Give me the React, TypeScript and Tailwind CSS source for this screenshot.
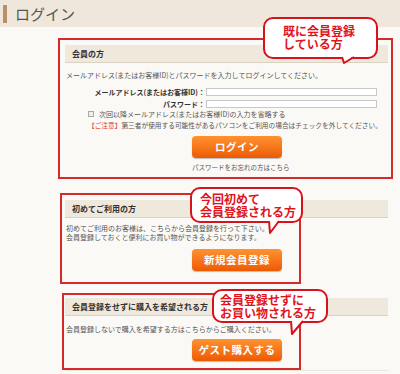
import React from 'react'

const FONT = "font-['Noto_Sans_CJK_JP','Noto_Sans',sans-serif]"

function SectionHead({ title }: { title: string }) {
  return (
    <div className="h-[18px] bg-[#efe8dc] border-b border-[#dcd2c2] flex items-center pl-[7px]">
      <span className="text-[8px] font-bold text-[#333] leading-none">{title}</span>
    </div>
  )
}

function OrangeButton({ label, className = '' }: { label: string; className?: string }) {
  return (
    <div
      className={`w-[90px] h-[22px] rounded-[4px] bg-gradient-to-b from-[#ff922f] to-[#ec5a00] shadow-[0_1px_1px_rgba(0,0,0,0.25)] flex items-center justify-center ${className}`}
    >
      <span className="text-white font-bold text-[10.5px] leading-none tracking-[0.5px]">{label}</span>
    </div>
  )
}

function Callout({
  lines,
  className,
  pad,
  tail,
}: {
  lines: string[]
  className: string
  pad: string
  tail: { left: number; tipX: number; width: number; height: number }
}) {
  const { left, tipX, width, height } = tail
  return (
    <div className={`absolute ${className}`}>
      <div className={`relative h-full rounded-[10px] border-2 border-[#d8121c] bg-white ${pad}`}>
        {lines.map((l) => (
          <div key={l} className="text-[12px] leading-[13px] font-bold text-[#e0141e] whitespace-nowrap">
            {l}
          </div>
        ))}
        <svg
          className="absolute"
          style={{ left, bottom: -height }}
          width={width}
          height={height + 3}
          viewBox={`0 0 ${width} ${height + 3}`}
        >
          <polygon points={`0,0 ${width},0 ${tipX},${height + 3}`} fill="#fff" />
          <polyline
            points={`1,3 ${tipX},${height + 2} ${width - 1},3`}
            fill="none"
            stroke="#d8121c"
            strokeWidth="2"
            strokeLinejoin="round"
          />
        </svg>
      </div>
    </div>
  )
}

export default function App() {
  return (
    <div className={`relative w-[400px] h-[374px] overflow-hidden bg-[#fbf9f6] ${FONT}`}>
      <div className="h-[27px] bg-[#efe7dc] flex items-center pl-[3px]">
        <div className="w-[4px] h-[18px] bg-[#b8916a]" />
        <span className="ml-[8px] text-[15px] text-[#555] leading-none">ログイン</span>
      </div>

      <div className="pl-[65px] w-[388px]">
        {/* 会員の方 */}
        <div className="mt-[18px]">
          <SectionHead title="会員の方" />
          <p className="mt-[7px] pl-[1px] text-[7px] leading-[10px] text-[#555] whitespace-nowrap">
            メールアドレス(またはお客様ID)とパスワードを入力してログインしてください。
          </p>
          <div className="mt-[8px] flex items-center h-[8px]">
            <span className="w-[140px] text-right text-[7px] font-bold text-[#333] leading-none whitespace-nowrap">
              メールアドレス(またはお客様ID)：
            </span>
            <div className="ml-[1px] w-[171px] h-[8px] bg-white border border-[#c8c8c8]" />
          </div>
          <div className="mt-[4px] flex items-center h-[8px]">
            <span className="w-[140px] text-right text-[7px] font-bold text-[#333] leading-none">パスワード：</span>
            <div className="ml-[1px] w-[171px] h-[8px] bg-white border border-[#c8c8c8]" />
          </div>
          <div className="mt-[1px] flex items-center h-[10px] pl-[23px]">
            <div className="w-[6px] h-[6px] border border-[#aaa] bg-[#eee]" />
            <span className="ml-[5px] text-[7px] text-[#555] leading-none whitespace-nowrap">
              次回以降メールアドレス(またはお客様ID)の入力を省略する
            </span>
          </div>
          <p className="mt-[1px] pl-[23px] text-[6.7px] leading-[10px] text-[#555] whitespace-nowrap">
            <span className="text-[#e23b2e]">【ご注意】</span>
            第三者が使用する可能性があるパソコンをご利用の場合はチェックを外してください。
          </p>
          <OrangeButton label="ログイン" className="mt-[6px] ml-[127px]" />
          <p className="mt-[4px] ml-[127px] text-[6.5px] leading-[10px] text-[#555] whitespace-nowrap">
            パスワードをお忘れの方はこちら
          </p>
        </div>

        {/* 初めてご利用の方 */}
        <div className="mt-[28px]">
          <SectionHead title="初めてご利用の方" />
          <div className="mt-[6px] pl-[1px] text-[7px] leading-[9px] text-[#555] whitespace-nowrap">
            <p>初めてご利用のお客様は、こちらから会員登録を行って下さい。</p>
            <p>会員登録しておくと便利にお買い物ができるようになります。</p>
          </div>
          <OrangeButton label="新規会員登録" className="mt-[7px] ml-[127px]" />
        </div>

        {/* ゲスト */}
        <div className="mt-[27px] pb-[9px] border-b border-[#ebe6dd]">
          <SectionHead title="会員登録をせずに購入を希望される方" />
          <p className="mt-[8px] pl-[1px] text-[7px] leading-[10px] text-[#555] whitespace-nowrap">
            会員登録しないで購入を希望する方はこちらからご購入ください。
          </p>
          <OrangeButton label="ゲスト購入する" className="mt-[5px] ml-[127px]" />
        </div>
      </div>

      {/* annotation frames */}
      <div className="absolute left-[58px] top-[38px] w-[335px] h-[141px] border-2 border-[#d42a2a]" />
      <div className="absolute left-[60px] top-[193px] w-[241px] h-[91px] border-2 border-[#d42a2a]" />
      <div className="absolute left-[62px] top-[293px] w-[239px] h-[77px] border-2 border-[#d42a2a]" />

      <Callout
        lines={['既に会員登録', 'している方']}
        className="left-[263px] top-[17px] w-[115px] h-[42px]"
        pad="pl-[18px] pt-[5px]"
        tail={{ left: 76, tipX: 3, width: 14, height: 7 }}
      />
      <Callout
        lines={['今回初めて', '会員登録される方']}
        className="left-[190px] top-[187px] w-[113px] h-[36px]"
        pad="pl-[8px] pt-[3px]"
        tail={{ left: 76, tipX: 2, width: 12, height: 13 }}
      />
      <Callout
        lines={['会員登録せずに', 'お買い物される方']}
        className="left-[212px] top-[289px] w-[116px] h-[34px]"
        pad="pl-[6px] pt-[2px]"
        tail={{ left: 76, tipX: 2, width: 14, height: 14 }}
      />
    </div>
  )
}
